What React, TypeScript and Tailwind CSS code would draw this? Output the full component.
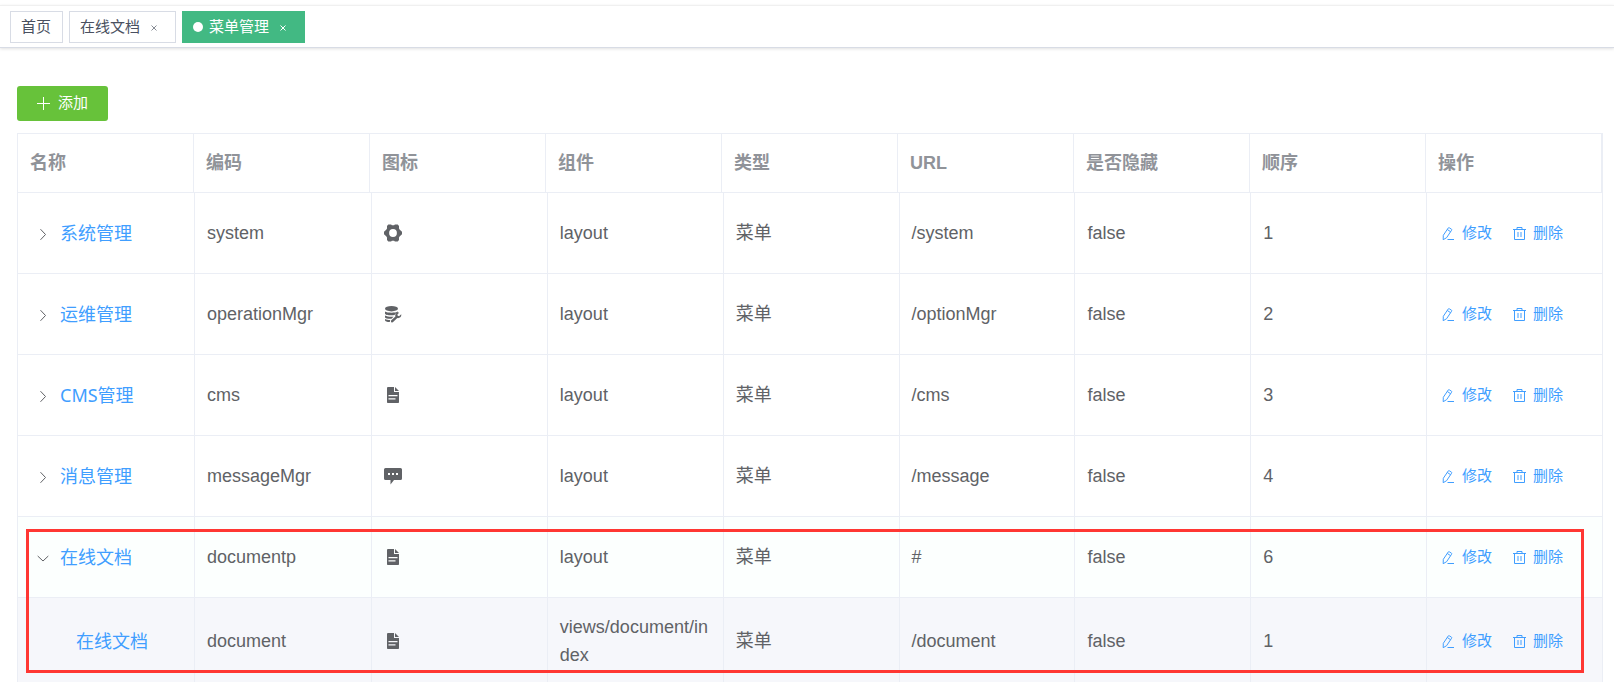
import React from "react";

type IconName = "gear" | "database" | "document" | "message";

interface MenuRow {
  id: string;
  name: string;
  code: string;
  icon: IconName;
  component: string;
  url: string;
  order: number;
  state: "closed" | "open" | "child";
}

const COLUMNS = ["名称", "编码", "图标", "组件", "类型", "URL", "是否隐藏", "顺序", "操作"];

const ROWS: MenuRow[] = [
  { id: "system", name: "系统管理", code: "system", icon: "gear", component: "layout", url: "/system", order: 1, state: "closed" },
  { id: "operation", name: "运维管理", code: "operationMgr", icon: "database", component: "layout", url: "/optionMgr", order: 2, state: "closed" },
  { id: "cms", name: "CMS管理", code: "cms", icon: "document", component: "layout", url: "/cms", order: 3, state: "closed" },
  { id: "message", name: "消息管理", code: "messageMgr", icon: "message", component: "layout", url: "/message", order: 4, state: "closed" },
  { id: "documentp", name: "在线文档", code: "documentp", icon: "document", component: "layout", url: "#", order: 6, state: "open" },
  { id: "document", name: "在线文档", code: "document", icon: "document", component: "views/document/index", url: "/document", order: 1, state: "child" },
];

function MenuIcon({ name }: { name: IconName }) {
  return (
    <svg viewBox="0 0 18 18" className="block size-[18px]" fill="currentColor" aria-hidden="true">
      {name === "gear" && (
        <path
          fillRule="evenodd"
          d="M4.300.5h2.800l.8.800h2.200l.8-.8h2.800l1.300 1.500v2.500l.8 1.300L18 7.800v2.400l-2.200 2-.8 1.300V16l-1.300 1.500h-2.800l-.8-.8H7.900l-.8.800H4.300L3 16v-2.500l-.8-1.300L0 10.200V7.800l2.200-2L3 4.500V2zM9 5.100a3.900 3.900 0 1 0 0 7.800 3.900 3.900 0 0 0 0-7.800z"
        />
      )}
      {name === "database" && (
        <>
          <ellipse cx="7.500" cy="3.700" rx="6.500" ry="2.700" />
          <path d="M1 6.500c2.400 1.600 10.600 1.600 13 0v1.200c-1.700.3-2.900 1.200-3.500 2.400C7 10.500 1 10.300 1 8.500z" />
          <path d="M1 10.500c2 1.200 5.500 1.500 8.500 1.200l-2 2C4.500 13.800 1 13.500 1 12.200z" />
          <path d="M1 14c1.400.8 3.200 1.100 5.200 1.100l-.4 2C3 17 1 16.500 1 15.300z" />
          <path d="M17.200 9.200l-2.100 2-1.400-.4-.3-1.300 1.700-1.800c-2.500-.5-4.400 1.500-3.700 3.700l-4.100 3.900c-1.100 1.200.6 2.900 1.800 1.800l4.200-4c2.500.4 4.500-1.500 3.900-3.900z" />
        </>
      )}
      {name === "document" && (
        <path
          fillRule="evenodd"
          d="M4 1h6v5h5v10.200a.8.800 0 0 1-.8.800H3.800a.8.800 0 0 1-.8-.8V2a1 1 0 0 1 1-1zM11 1l4 4h-4zM4.500 9h9v1.200h-9zM4.500 12.200h7v1.300h-7z"
        />
      )}
      {name === "message" && (
        <path
          fillRule="evenodd"
          d="M1.500 1h15A1.500 1.500 0 0 1 18 2.500v9a1.500 1.500 0 0 1-1.500 1.500H10l-3.500 4.500V13h-5A1.500 1.500 0 0 1 0 11.500v-9A1.500 1.500 0 0 1 1.500 1zM4 6v2h2V6zM8 6v2h2V6zM12 6v2h2V6z"
        />
      )}
    </svg>
  );
}

function Chevron({ open }: { open: boolean }) {
  return (
    <svg viewBox="0 0 14 14" className="block size-[14px]" fill="none" stroke="currentColor" strokeWidth="1" aria-hidden="true">
      {open ? <path d="M1.700 5l5.300 5 5.300-5" /> : <path d="M4.500 2.200l5 5.300-5 5.300" />}
    </svg>
  );
}

function EditIcon() {
  return (
    <svg viewBox="0 0 15 15" className="block size-[15px]" fill="none" stroke="currentColor" strokeWidth="1" aria-hidden="true">
      <path d="M2.300 9.300l5-7.400q.4-.5 1-.1l2.200 1.400q.5.400.1 1l-5 7.500-3.400 2zM6.300 3.500l3.300 2.200M6.500 13.500H13" />
    </svg>
  );
}

function TrashIcon() {
  return (
    <svg viewBox="0 0 15 15" className="block size-[15px]" fill="none" stroke="currentColor" strokeWidth="1" aria-hidden="true">
      <path d="M1 3.500h13M5 3.500v-2h5v2M2.500 3.500v10h10v-10M6 6v5M9 6v5" />
    </svg>
  );
}

function CloseIcon() {
  return (
    <svg viewBox="0 0 8 8" className="block size-2" fill="none" stroke="currentColor" strokeWidth="1" aria-hidden="true">
      <path d="M1.500 1.500l5 5M6.500 1.500l-5 5" />
    </svg>
  );
}

function Tabs() {
  return (
    <nav className="flex gap-[6px] border-t border-b border-t-[#f0f0f0] border-b-[#d8dce5] px-[10px] pt-[5px] pb-[4px] text-[15px] text-[#495060] shadow-[0_1px_3px_0_rgba(0,0,0,0.12)]">
      <a href="#home" className="flex h-8 items-center border border-[#d8dce5] bg-white pr-[11px] pl-[10px]">
        首页
      </a>
      <span className="flex h-8 items-center border border-[#d8dce5] bg-white pr-[17px] pl-[10px]">
        <a href="#docs">在线文档</a>
        <button type="button" aria-label="关闭在线文档" className="ml-[10px] pt-px text-[#868b94]">
          <CloseIcon />
        </button>
      </span>
      <span className="flex h-8 items-center border border-[#42b983] bg-[#42b983] pr-[17px] pl-[10px] text-white">
        <span className="mr-[6px] size-[10px] rounded-full bg-white" />
        <a href="#menus" aria-current="page">菜单管理</a>
        <button type="button" aria-label="关闭菜单管理" className="ml-[10px] pt-px">
          <CloseIcon />
        </button>
      </span>
    </nav>
  );
}

function Row({ row }: { row: MenuRow }) {
  const tint = row.state === "child" ? "h-[87px] bg-[#f6f7fb]" : row.state === "open" ? "h-[81px] bg-[#fcfffe]" : "h-[81px] bg-white";
  const cell = "border-r border-b border-[#ebeef5] px-3 break-all";
  return (
    <tr className={tint}>
      <td className={cell}>
        <div className="flex items-center">
          {row.state === "child" ? (
            <span className="w-[46px]" />
          ) : (
            <button type="button" aria-label={row.state === "open" ? "收起" : "展开"} className="mr-[10px] ml-[6px] pt-[2px]">
              <Chevron open={row.state === "open"} />
            </button>
          )}
          <a href={"#" + row.id} className="font-['Noto_Sans','Noto_Sans_CJK_SC',sans-serif] text-[#409eff]">
            {row.name}
          </a>
        </div>
      </td>
      <td className={cell}>{row.code}</td>
      <td className={cell}>
        <MenuIcon name={row.icon} />
      </td>
      <td className={cell}>{row.component}</td>
      <td className={cell}>菜单</td>
      <td className={cell}>{row.url}</td>
      <td className={cell}>false</td>
      <td className={cell}>{row.order}</td>
      <td className={cell}>
        <div className="flex gap-5 pl-[2px] text-[15px] whitespace-nowrap text-[#409eff]">
          <button type="button" className="flex items-center gap-[6px]">
            <EditIcon />
            修改
          </button>
          <button type="button" className="flex items-center gap-[6px]">
            <TrashIcon />
            删除
          </button>
        </div>
      </td>
    </tr>
  );
}

export default function App() {
  return (
    <div className="h-screen overflow-hidden bg-white pt-[5px] font-['Liberation_Sans','Noto_Sans_CJK_SC',sans-serif] text-[#606266]">
      <Tabs />
      <main className="pt-[38px] pr-[11px] pl-[17px]">
        <button type="button" className="flex h-[35px] items-center gap-[6px] rounded-[3px] bg-[#67c23a] px-5 text-[15px] text-white">
          <svg viewBox="0 0 15 15" className="size-[15px]" fill="none" stroke="currentColor" aria-hidden="true">
            <path d="M6.500 1v13M0 7.500h13" />
          </svg>
          添加
        </button>
        <div className="relative mt-3 border-t border-l border-[#ebeef5] text-[18px] leading-[28px]">
          <div className="border-r border-[#ebeef5]">
            <table className="w-full table-fixed border-separate border-spacing-0">
              <thead>
                <tr className="h-[59px] text-left text-[#909399]">
                  {COLUMNS.map((title) => (
                    <th key={title} scope="col" className="border-r border-b border-[#ebeef5] px-3 font-bold">
                      {title}
                    </th>
                  ))}
                </tr>
              </thead>
            </table>
          </div>
          <table aria-label="菜单列表" className="w-full table-fixed border-separate border-spacing-0">
            <colgroup>
              <col className="w-[177px]" />
              <col className="w-[177px]" />
              <col span={7} />
            </colgroup>
            <tbody>
              {ROWS.map((row) => (
                <Row key={row.id} row={row} />
              ))}
            </tbody>
          </table>
          <div className="pointer-events-none absolute top-[395px] right-[19px] left-2 h-[144px] border-3 border-[#ff3733]" />
        </div>
      </main>
    </div>
  );
}
